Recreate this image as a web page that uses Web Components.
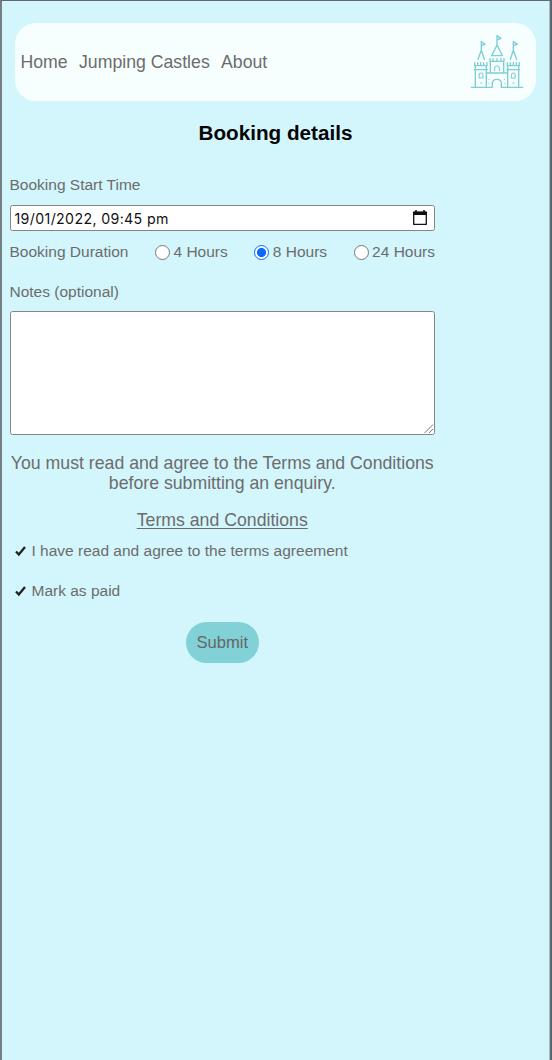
<!DOCTYPE html>
<html lang="en"><head><meta charset="utf-8"><title>Booking details</title>
<style>
body{margin:0;background:#d3f6fd;font-family:"Liberation Sans",Arial,sans-serif;color:#6c6c6c}
</style></head><body>
<booking-page></booking-page>
<script>
const define=(name,html)=>customElements.define(name,class extends HTMLElement{
  constructor(){super();const t=document.createElement('template');t.innerHTML=html;
    this.attachShadow({mode:'open'}).append(t.content.cloneNode(true));}
});
define('castle-logo',`<style>:host{display:block;width:54px;height:55px}svg{display:block}</style>
<svg width="54" height="55" viewBox="30 42 162 165" fill="none" stroke="#80ced6" stroke-width="4.200" stroke-linejoin="round" stroke-linecap="round">
<path d="M34 202H97M124 202H188M97 202V190Q97 178 110.500 178Q124 178 124 190V202"/>
<path d="M46 202V147M79 202V147M43 149H82M44 128V137H81V128M53 128V135M62 128V135M71 128V135M46 137V147M79 137V147"/>
<path d="M143 202V147M176 202V147M140 149H179M142 128V137H178V128M151 128V135M160 128V135M169 128V135M143 137V147M176 137V147"/>
<path d="M79 159H143M91 156V123M131 156V123M90 116V124H132V116M99 116V122M111 116V122M123 116V122"/>
<path d="M104 152V144Q104 138 111 138Q118 138 118 144V152M57.500 174V165Q57.500 159 63 159Q68.500 159 68.500 165V174ZM154.500 174V165Q154.500 159 160 159Q165.500 159 165.500 165V174Z" stroke-width="3.400"/>
<path d="M95 107L111 75L127 107ZM111 75V47L123 55L111 60M54 118L64 91L73 118M64 91V65L75 72L64 77M151 118L160 91L170 118M160 91V65L172 72L160 77"/>
<path d="M61 189H65M158 189H162M87 178V179M133 178V179M87 190V191M135 190V191" stroke-width="3"/></svg>`);
define('site-nav',`<style>:host{display:flex;align-items:center;justify-content:space-between;height:78px;box-sizing:border-box;margin:0 14px 0 13px;padding:0 12px 1px 5.500px;border-radius:21px;background:#f7fffe}
nav{display:flex;gap:11.300px;font-size:17.700px;line-height:20px}a{color:inherit}</style>
<nav><a>Home</a><a>Jumping Castles</a><a>About</a></nav><castle-logo></castle-logo>`);
define('date-field',`<style>:host{display:flex;box-sizing:border-box;height:26px;border:1px solid #858585;border-radius:2.500px;background:#fff;color:#111;align-items:center;justify-content:space-between;padding:1px 6px 0 4px;font:14.200px/18px Inter,sans-serif;letter-spacing:.35px}svg{display:block;margin-top:-2px}</style>
<span><slot></slot></span><svg width="16" height="17" viewBox="0 0 16 17"><path d="M1.700 3.300H14.300V15.300H1.700Z" fill="none" stroke="#111" stroke-width="1.300" stroke-linejoin="round"/><path d="M1.200 2.500H14.800V6H1.200Z" fill="#111"/><path d="M4 1V3M12 1V3" stroke="#111" stroke-width="1.500"/></svg>`);
define('radio-option',`<style>:host{display:flex;gap:3.500px;align-items:center}i{box-sizing:border-box;width:15px;height:15px;border:1px solid #777;border-radius:50%;background:#fff;margin-top:1px}:host([checked]) i{border:1.300px solid #0b69ff;background:radial-gradient(circle,#0b69ff 4.200px,#fff 4.800px)}</style><i></i><span><slot></slot></span>`);
define('notes-area',`<style>:host{display:flex;align-items:flex-end;justify-content:flex-end;height:124px;box-sizing:border-box;border:1px solid #858585;border-radius:2.500px;background:#fff}</style>
<svg width="11" height="11" viewBox="0 0 11 11" stroke="#777" stroke-width="1"><path d="M1.500 10L10 1.500M6 10L10 6"/></svg>`);
define('check-option',`<style>:host{display:flex;align-items:center;gap:5.500px;height:18px;padding-left:5.500px;font-size:15.500px;line-height:18px}svg{display:block}</style>
<svg width="11" height="12" viewBox="0 0 11 12"><path d="M1 6.500L3.800 9.500L10 2" fill="none" stroke="#222" stroke-width="2.300"/></svg><span><slot></slot></span>`);
define('submit-button',`<style>:host{display:flex;align-items:center;justify-content:center;box-sizing:border-box;width:73px;height:41px;padding-top:1px;border-radius:20.500px;background:#82d1d6;color:#666;font-size:16.600px}</style><slot></slot>`);
define('booking-form',`<style>:host{display:flex;flex-direction:column;width:425.500px;margin-left:7.500px;font-size:15.500px;line-height:18px}
.label{height:18px}date-field{margin-top:11px}date-field,notes-area{width:425px}
.duration{display:flex;justify-content:space-between;margin-top:12px}
.notes{margin-top:22px}notes-area{margin-top:10px}
p{margin:18px -10px 0;text-align:center;font-size:17.700px;line-height:20px}
p.link{margin-top:17px;text-decoration:underline;text-underline-offset:1.500px;text-decoration-thickness:1px}
.agree{margin-top:12px}.paid{margin-top:22px}submit-button{align-self:center;margin-top:21.500px}</style>
<div class="label">Booking Start Time</div><date-field>19/01/2022, 09:45 pm</date-field>
<div class="duration"><span>Booking Duration</span><radio-option>4 Hours</radio-option><radio-option checked>8 Hours</radio-option><radio-option>24 Hours</radio-option></div>
<div class="label notes">Notes (optional)</div><notes-area></notes-area>
<p>You must read and agree to the Terms and Conditions<br>before submitting an enquiry.</p><p class="link">Terms and Conditions</p>
<check-option class="agree">I have read and agree to the terms agreement</check-option><check-option class="paid">Mark as paid</check-option>
<submit-button>Submit</submit-button>`);
define('booking-page',`<style>:host{display:block;box-sizing:border-box;height:1060px;padding-top:22px;border:solid #606970;border-width:1px 2px 0 2px;border-left-color:#737f84;border-right-color:#59666b;box-shadow:inset -1px 0 #a5c0c6}
h1{margin:19px 1px 0 0;text-align:center;font-size:20.700px;line-height:26px;color:#050505}booking-form{margin-top:30px}</style>
<site-nav></site-nav><h1>Booking details</h1><booking-form></booking-form>`);
</script></body></html>
